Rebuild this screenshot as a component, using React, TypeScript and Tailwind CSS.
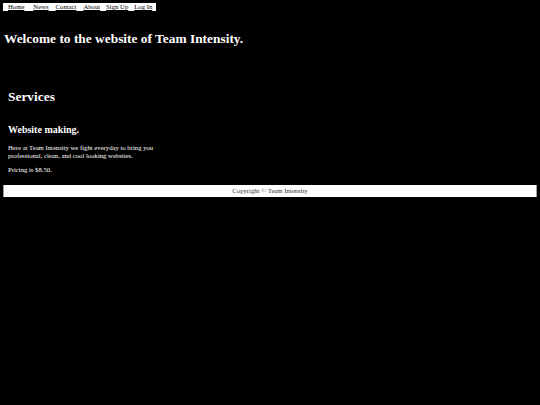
import React from "react";

export default function App() {
  const links = [
    { t: "Home", ml: "ml-[5px]" },
    { t: "News", ml: "ml-[9px]" },
    { t: "Contact", ml: "ml-[7px]" },
    { t: "About", ml: "ml-[7px]" },
    { t: "Sign Up", ml: "ml-[6px]" },
    { t: "Log In", ml: "ml-[6px]" },
  ];
  return (
    <div className="w-[540px] h-[405px] bg-black text-white overflow-hidden font-['Liberation_Serif',serif]">
      <nav className="flex ml-[3px] pt-[3px]">
        <div className="flex items-center h-[8px] bg-white pr-[4px] text-black text-[6.7px] leading-[8px]">
          {links.map((l) => (
            <a key={l.t} href="#" className={`${l.ml} underline`}>
              {l.t}
            </a>
          ))}
        </div>
      </nav>
      <h1 className="mt-[19.5px] ml-[4px] text-[13.4px] leading-[15.4px] font-bold">
        Welcome to the website of Team Intensity.
      </h1>
      <section className="ml-[8px]">
        <h1 className="mt-[43.5px] text-[13.4px] leading-[15.4px] font-bold">Services</h1>
        <h2 className="mt-[19px] text-[10px] leading-[11.5px] font-bold">Website making.</h2>
        <p className="mt-[8.5px] w-[155px] text-[6.7px] leading-[7.7px]">
          Here at Team Intensity we fight everyday to bring you professional, clean, and cool looking websites.
        </p>
        <p className="mt-[6.6px] text-[6.7px] leading-[7.7px]">Pricing is $8.50.</p>
      </section>
      <footer className="mt-[11.3px] mx-[3px] h-[12px] bg-white border-x border-gray-400 flex items-center justify-center text-[6.7px] leading-[8px] text-[#333]">
        Copyright © Team Intensity
      </footer>
    </div>
  );
}
